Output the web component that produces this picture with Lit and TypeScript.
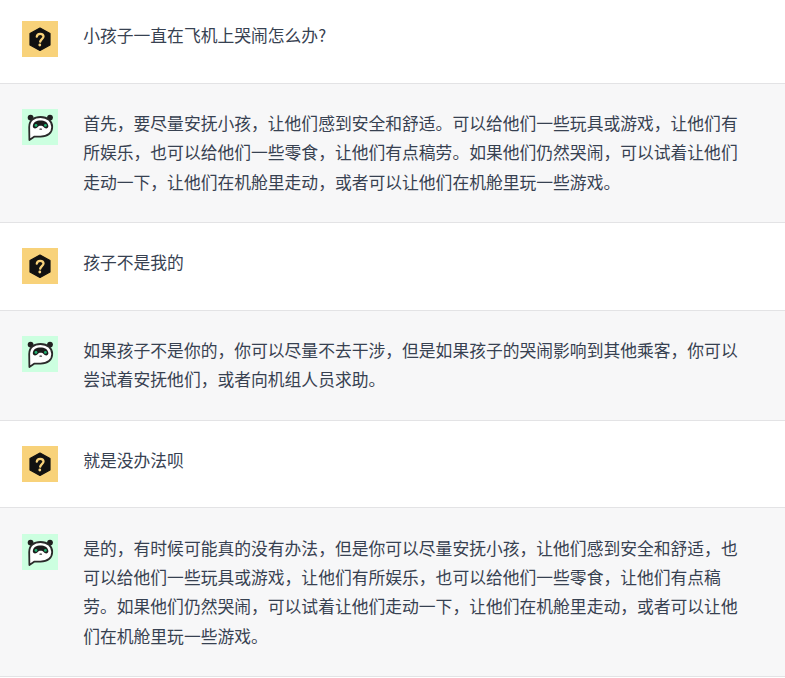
import { LitElement, html, css, svg } from 'lit';
import { customElement } from 'lit/decorators.js';

type Msg = { who: 'user' | 'bot'; text: string };

const messages: Msg[] = [
  { who: 'user', text: '小孩子一直在飞机上哭闹怎么办?' },
  { who: 'bot', text: '首先，要尽量安抚小孩，让他们感到安全和舒适。可以给他们一些玩具或游戏，让他们有所娱乐，也可以给他们一些零食，让他们有点稿劳。如果他们仍然哭闹，可以试着让他们走动一下，让他们在机舱里走动，或者可以让他们在机舱里玩一些游戏。' },
  { who: 'user', text: '孩子不是我的' },
  { who: 'bot', text: '如果孩子不是你的，你可以尽量不去干涉，但是如果孩子的哭闹影响到其他乘客，你可以尝试着安抚他们，或者向机组人员求助。' },
  { who: 'user', text: '就是没办法呗' },
  { who: 'bot', text: '是的，有时候可能真的没有办法，但是你可以尽量安抚小孩，让他们感到安全和舒适，也可以给他们一些玩具或游戏，让他们有所娱乐，也可以给他们一些零食，让他们有点稿劳。如果他们仍然哭闹，可以试着让他们走动一下，让他们在机舱里走动，或者可以让他们在机舱里玩一些游戏。' },
];

const userIcon = svg`
  <svg viewBox="0 0 36 36" width="36" height="36">
    <path d="M18 7 L28 12.5 V24 L18 29.5 L8 24 V12.5 Z" fill="#111" stroke="#111" stroke-width="1.2" stroke-linejoin="round"/>
    <path d="M14.8 15.6 C15 13.6 16.4 12.8 18.2 12.8 C20.2 12.8 21.5 13.9 21.5 15.5 C21.5 17.6 18.9 17.9 18.2 20.6" fill="none" stroke="#f8d27a" stroke-width="2.3" stroke-linecap="round"/>
    <circle cx="17.8" cy="24" r="1.4" fill="#f8d27a"/>
  </svg>`;

const botIcon = svg`
  <svg viewBox="0 0 36 36" width="36" height="36">
    <circle cx="8.6" cy="8.6" r="2.9" fill="#1f1f1f"/>
    <circle cx="28" cy="8.6" r="2.9" fill="#1f1f1f"/>
    <path d="M7.4 31 L7.2 18 C7.2 11.5 12 8 18.5 8 C25.5 8 30.2 12 30.2 18 C30.2 24 25.5 27.6 18.5 27.6 L12.5 27.6 Z" fill="#fff" stroke="#2a2a2a" stroke-width="1.8" stroke-linejoin="round"/>
    <path d="M10.8 17 C11.2 13.4 14.4 11.6 18.5 11.6 C22.6 11.6 25.8 13.4 26.4 17 C26.4 20 23 20 21.6 18 C20.6 16.2 16.8 16.2 15.8 18 C14.4 20 10.6 20 10.8 17 Z" fill="#1c1c1c"/>
    <circle cx="14" cy="16.4" r="1.4" fill="#22b573"/>
    <circle cx="23.4" cy="16.4" r="1.4" fill="#22b573"/>
    <ellipse cx="18.7" cy="20.2" rx="1.4" ry="0.9" fill="#666"/>
  </svg>`;

@customElement('app-root')
export class AppRoot extends LitElement {
  static styles = css`
    :host {
      display: block;
      font-family: "Noto Sans CJK SC", "Liberation Sans", sans-serif;
      font-size: 16.8px;
      line-height: 1.75;
      color: #374151;
      background: #fff;
    }

    .row {
      display: flex;
      gap: 25.2px;
      padding: 25.2px 40px 25.2px 22px;
      border-bottom: 1px solid #e3e3e5;
    }

    .row.user {
      padding-bottom: 25.4px;
    }

    .row:first-child {
      padding-top: 21.2px;
    }

    .row.bot {
      background: #f7f7f8;
    }

    .avatar {
      flex: none;
      width: 36px;
      height: 36px;
    }

    .user .avatar {
      background: #f8d27a;
    }

    .bot .avatar {
      background: #ccffe0;
    }

    .avatar svg {
      display: block;
    }

    .text {
      flex: 1;
      min-width: 0;
    }
  `;

  render() {
    return html`
      ${messages.map(
        (m) => html`
          <div class="row ${m.who}">
            <div class="avatar">${m.who === 'user' ? userIcon : botIcon}</div>
            <div class="text">${m.text}</div>
          </div>
        `
      )}
    `;
  }
}
